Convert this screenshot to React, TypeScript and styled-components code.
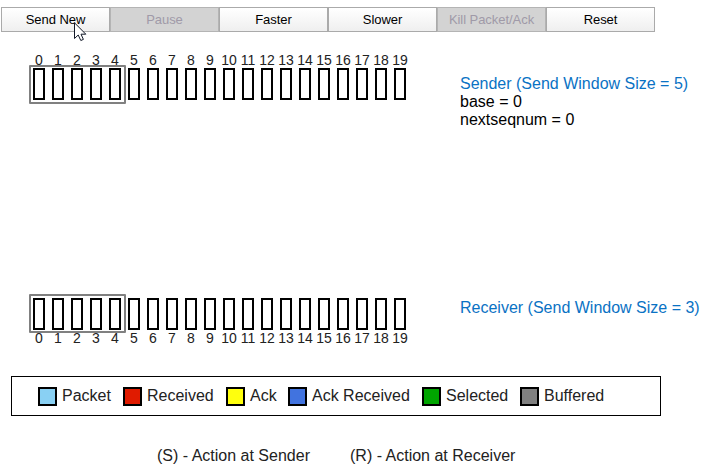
import React from "react";
import styled, { createGlobalStyle } from "styled-components";

const GlobalStyle = createGlobalStyle`
  body {
    margin: 0;
    background: #fff;
    font-family: "Liberation Sans", Arial, sans-serif;
    overflow: hidden;
  }
`;

const Page = styled.main`
  width: 706px;
  height: 474px;
  box-sizing: border-box;
  padding-top: 7px;
  display: flex;
  flex-direction: column;
  overflow: hidden;
`;

const Toolbar = styled.div`
  display: flex;
  flex: none;
  margin-left: 1px;
  height: 25px;
`;

const ToolButton = styled.button`
  width: 109px;
  height: 25px;
  padding: 0;
  border: 1px solid #aaa;
  border-radius: 0;
  background: linear-gradient(#fff, #efefef);
  color: #000;
  font: 13px/21px "Liberation Sans", Arial, sans-serif;
  letter-spacing: -0.05px;

  &:disabled {
    background: #d3d3d3;
    border-color: #b4b4b4;
    color: #a09aa8;
  }
`;

const Station = styled.section<{ $top: number }>`
  display: flex;
  flex: none;
  margin-top: ${(p) => p.$top}px;
  height: 54px;
`;

const Track = styled.div`
  position: relative;
  display: flex;
  flex: none;
  width: 460px;
  padding-left: 30px;
  box-sizing: border-box;
`;

const SlotColumn = styled.div<{ $flip?: boolean }>`
  display: flex;
  flex: none;
  flex-direction: ${(p) => (p.$flip ? "column-reverse" : "column")};
  justify-content: ${(p) => (p.$flip ? "flex-end" : "flex-start")};
  align-items: center;
  width: 18px;
  margin-right: 1px;
`;

const SlotLabel = styled.span`
  font-size: 14px;
  line-height: 16px;
  color: #222;
`;

const Slot = styled.span`
  box-sizing: border-box;
  width: 12px;
  height: 32px;
  border: 2px solid #000;
`;

const WindowFrame = styled.div<{ $top: number }>`
  position: absolute;
  left: 29px;
  top: ${(p) => p.$top}px;
  width: 97px;
  height: 39px;
  box-sizing: border-box;
  border: 2px solid #808080;
  border-radius: 1px;
`;

const Info = styled.div<{ $top: number }>`
  padding-top: ${(p) => p.$top}px;
  font-size: 16px;
  line-height: 18px;
  white-space: nowrap;
`;

const InfoTitle = styled.div`
  color: #0a72c4;
`;

const Legend = styled.div`
  display: grid;
  flex: none;
  grid-template-columns: 85px 103px 62px 134px 98px auto;
  align-items: center;
  box-sizing: border-box;
  width: 650px;
  height: 40px;
  margin: 24px 0 0 11px;
  padding-left: 26px;
  border: 1px solid #000;
`;

const LegendItem = styled.div`
  display: flex;
  align-items: center;
  gap: 5px;
  font-size: 16px;
  line-height: 18px;
  color: #222;
  white-space: nowrap;
`;

const LegendText = styled.span`
  line-height: 19px;
  margin-bottom: 2px;
`;

const Swatch = styled.span<{ $color: string }>`
  box-sizing: border-box;
  width: 19px;
  height: 19px;
  border: 2px solid #000;
  background: ${(p) => p.$color};
`;

const Notes = styled.div`
  display: grid;
  grid-template-columns: 193px auto;
  margin: 31px 0 0 157px;
  font-size: 16px;
  line-height: 18px;
  color: #222;
`;

const Cursor = styled.svg`
  position: absolute;
  left: 74px;
  top: 22px;
`;

const buttons = [
  { label: "Send New" },
  { label: "Pause", disabled: true },
  { label: "Faster" },
  { label: "Slower" },
  { label: "Kill Packet/Ack", disabled: true },
  { label: "Reset" },
];

const legend = [
  ["Packet", "#89d0f3"],
  ["Received", "#e01b00"],
  ["Ack", "#ffff0d"],
  ["Ack Received", "#4173df"],
  ["Selected", "#00a500"],
  ["Buffered", "#808080"],
];

const slots = Array.from({ length: 20 }, (_, i) => i);

function SlotTrack({ flip, frameTop }: { flip?: boolean; frameTop: number }) {
  return (
    <Track>
      <WindowFrame $top={frameTop} />
      {slots.map((n) => (
        <SlotColumn key={n} $flip={flip}>
          <SlotLabel>{n}</SlotLabel>
          <Slot />
        </SlotColumn>
      ))}
    </Track>
  );
}

export default function App() {
  return (
    <Page>
      <GlobalStyle />
      <Toolbar>
        {buttons.map((b) => (
          <ToolButton key={b.label} disabled={b.disabled}>
            {b.label}
          </ToolButton>
        ))}
      </Toolbar>
      <Station $top={20}>
        <SlotTrack frameTop={13} />
        <Info $top={23}>
          <InfoTitle>Sender (Send Window Size = 5)</InfoTitle>
          <div>base = 0</div>
          <div>nextseqnum = 0</div>
        </Info>
      </Station>
      <Station $top={192}>
        <SlotTrack flip frameTop={-4} />
        <Info $top={1}>
          <InfoTitle>Receiver (Send Window Size = 3)</InfoTitle>
        </Info>
      </Station>
      <Legend>
        {legend.map(([label, color]) => (
          <LegendItem key={label}>
            <Swatch $color={color} />
            <LegendText>{label}</LegendText>
          </LegendItem>
        ))}
      </Legend>
      <Notes>
        <span>(S) - Action at Sender</span>
        <span>(R) - Action at Receiver</span>
      </Notes>
      <Cursor width="13" height="20" viewBox="0 0 13 20" aria-hidden="true">
        <path
          d="M.5 .8V16.5L4.2 13L6.8 18.5L9.4 17.4L7 12.2H11.8Z"
          fill="#fff"
          stroke="#111827"
          strokeWidth="1"
        />
      </Cursor>
    </Page>
  );
}
